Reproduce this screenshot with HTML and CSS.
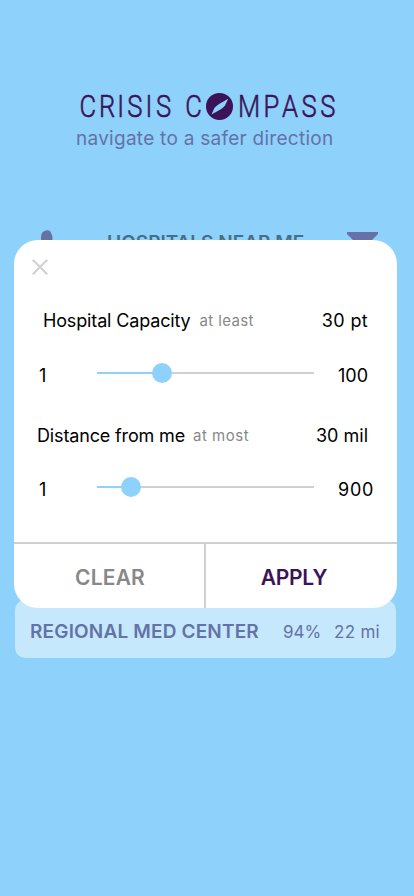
FILE: index.html
```html
<!DOCTYPE html>
<html lang="en">
<head>
<meta charset="utf-8">
<title>Crisis Compass</title>
<link rel="stylesheet" href="styles.css">
</head>
<body>
<main class="app">
  <header class="brand">
    <svg class="logo" width="274" height="40" viewBox="0 0 274 40" role="img" aria-label="Crisis Compass">
      <text class="logo-text" transform="scale(.8 1)" y="32.3" x="22.2 46.5 63.4 81.2 98.8 116.9">CRISIS</text>
      <text class="logo-text" transform="scale(.8 1)" y="32.3" x="154.4">C</text>
      <circle cx="149.5" cy="21.4" r="13.5" fill="#3a1358"/>
      <path d="M141.5 29.6 L144.5 22.8 Q146.5 20.5 149.5 18.7 L158.2 13.8 L155 20.5 Q153 23 150 24.8 Z" fill="#8ed1fa"/>
      <text class="logo-text" transform="scale(.8 1)" y="32.3" x="223.8 251.8 275 298.8 322.3">MPASS</text>
    </svg>
    <p class="tagline">navigate to a safer direction</p>
  </header>

  <section class="results">
    <div class="toolbar">
      <svg class="pin" width="14" height="24" viewBox="0 0 14 24"><path d="M1 24 V7 Q1 1 7 .2 Q10.5 -.2 11.5 4 Q13 7 12.2 11 V24Z" fill="#6472a8"/></svg>
      <h2 class="heading">HOSPITALS NEAR ME</h2>
      <svg class="filter" width="32" height="24" viewBox="0 0 32 24"><path d="M0 0H31V2L20 13V24L11 19V13L0 2Z" fill="#6472a8"/></svg>
    </div>
    <div class="hospital">
      <span class="name">REGIONAL MED CENTER</span>
      <span class="load">94%</span>
      <span class="miles">22 mi</span>
    </div>
  </section>

  <section class="modal">
    <div class="modal-body">
      <svg class="close" width="16" height="16" viewBox="0 0 16 16"><path d="M.8 .8L15.2 15.2M15.2 .8L.8 15.2" stroke="#d0d0d0" stroke-width="2" fill="none"/></svg>
      <div class="label capacity">
        <span class="title">Hospital Capacity</span><span class="hint hint-least">at least</span><span class="value value-pt">30 pt</span>
      </div>
      <div class="range first">
        <span class="min">1</span>
        <div class="track"><div class="fill" style="width:65px"><i class="thumb"></i></div></div>
        <span class="max">100</span>
      </div>
      <div class="label distance">
        <span class="title">Distance from me</span><span class="hint">at most</span><span class="value">30 mil</span>
      </div>
      <div class="range second">
        <span class="min">1</span>
        <div class="track"><div class="fill" style="width:34px"><i class="thumb"></i></div></div>
        <span class="max max-far">900</span>
      </div>
    </div>
    <div class="actions">
      <div class="action clear"><span>CLEAR</span></div>
      <div class="action apply"><span>APPLY</span></div>
    </div>
  </section>
</main>
</body>
</html>
```
FILE: styles.css
```css
* { box-sizing: border-box; margin: 0; }
body { background: #8ed1fa; font-family: Inter, "Liberation Sans", sans-serif; }
span, p, h2 { white-space: nowrap; }
svg { display: block; }
.app { position: relative; width: 414px; height: 896px; overflow: hidden; background: #8ed1fa; padding-top: 85px; }
.brand { padding-left: 70px; height: 145px; }
.logo-text { font: 300 32px Roboto, sans-serif; fill: #3a1358; stroke: #3a1358; stroke-width: .6; stroke-linejoin: round; text-anchor: middle; }
.tagline { font-size: 19px; line-height: 28px; color: #6472a8; padding-left: 6px; letter-spacing: .27px; }
.results { height: 428px; padding: 0 18px 0 15px; display: flex; flex-direction: column; justify-content: space-between; }
.toolbar { display: flex; align-items: flex-start; padding-left: 25px; }
.heading { margin: 1px 0 0 53px; width: 240px; font-size: 19px; line-height: 24px; font-weight: 600; color: #466f86; }
.filter { margin-top: 2px; }
.hospital { display: flex; align-items: center; height: 58px; background: #c6e8fd; border-radius: 10px; padding: 4px 0 0 15px; color: #6472a8; }
.name { font-size: 19px; font-weight: 600; width: 253px; letter-spacing: .17px; }
.load { font-size: 17px; width: 51px; padding-top: 1px; }
.miles { font-size: 17px; padding-top: 1px; letter-spacing: .3px; }
.modal { position: absolute; left: 14px; top: 240px; width: 383px; height: 368px; border-radius: 24px; background: #fff; overflow: hidden; color: #000; }
.modal-body { height: 302px; padding-top: 19px; }
.close { margin-left: 18px; }
.label { display: flex; align-items: center; height: 24px; padding-right: 29px; font-size: 18px; }
.title { letter-spacing: -.15px; }
.capacity { margin-top: 33px; padding-left: 29px; }
.distance { margin-top: 40px; padding-left: 23px; }
.hint { font-size: 15px; color: #888; margin-left: 8px; padding-top: 1px; letter-spacing: .5px; }
.hint-least { margin-left: 9px; letter-spacing: .35px; }
.value { margin-left: auto; }
.value-pt { letter-spacing: .35px; }
.range { display: flex; align-items: center; height: 20px; padding-left: 25px; font-size: 18px; }
.first { margin-top: 31px; }
.second { margin-top: 30px; }
.range .min { width: 58px; padding-top: 4px; }
.track { width: 217px; height: 2px; background: #d0d0d0; }
.fill { position: relative; height: 2px; background: #8ed1fa; }
.thumb { position: absolute; right: -10px; top: -9px; width: 20px; height: 20px; border-radius: 50%; background: #8ed1fa; }
.range .max { margin-left: 24px; padding-top: 4px; }
.max-far { letter-spacing: .8px; }
.actions { display: flex; height: 66px; border-top: 2px solid #d0d0d0; font-size: 21px; font-weight: 600; }
.action { display: flex; align-items: center; justify-content: center; padding-top: 3px; }
.clear { width: 192px; padding-left: 2px; border-right: 2px solid #d0d0d0; color: #888; letter-spacing: .2px; }
.apply { width: 191px; padding-right: 15px; color: #3a1358; letter-spacing: -.3px; }
```
